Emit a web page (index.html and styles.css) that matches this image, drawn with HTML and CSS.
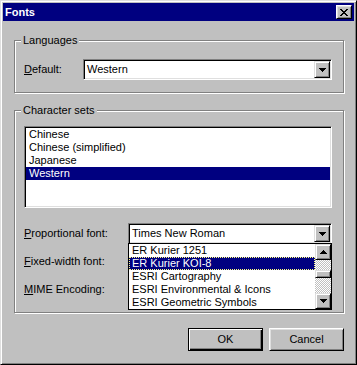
FILE: index.html
```html
<!DOCTYPE html>
<html>
<head>
<meta charset="utf-8">
<link rel="stylesheet" href="styles.css">
</head>
<body>
<div class="window">
  <div class="titlebar">
    <span class="title">Fonts</span>
    <button class="close"><svg width="8" height="7" viewBox="0 0 8 7" shape-rendering="crispEdges"><path d="M0 0h2v1H0zM6 0h2v1H6zM1 1h2v1H1zM5 1h2v1H5zM2 2h4v1H2zM3 3h2v1H3zM2 4h4v1H2zM1 5h2v1H1zM5 5h2v1H5zM0 6h2v1H0zM6 6h2v1H6z" fill="#000"/></svg></button>
  </div>
  <div class="content">
    <div class="group lang">
      <span class="group-label">Languages</span>
      <div class="field-row">
        <label class="lbl-default"><u>D</u>efault:</label>
        <div class="combo">
          <span class="combo-text">Western</span>
          <span class="drop-btn"><svg width="7" height="4" viewBox="0 0 7 4" shape-rendering="crispEdges"><path d="M0 0h7v1H0zM1 1h5v1H1zM2 2h3v1H2zM3 3h1v1H3z" fill="#000"/></svg></span>
        </div>
      </div>
    </div>
    <div class="group charsets">
      <span class="group-label">Character sets</span>
      <ul class="listbox">
        <li>Chinese</li>
        <li>Chinese (simplified)</li>
        <li>Japanese</li>
        <li class="selected">Western</li>
      </ul>
      <div class="font-grid">
        <label><u>P</u>roportional font:</label>
        <div class="combo">
          <span class="combo-text">Times New Roman</span>
          <span class="drop-btn"><svg width="7" height="4" viewBox="0 0 7 4" shape-rendering="crispEdges"><path d="M0 0h7v1H0zM1 1h5v1H1zM2 2h3v1H2zM3 3h1v1H3z" fill="#000"/></svg></span>
          <div class="dropdown">
            <ul class="dd-items">
              <li>ER Kurier 1251</li>
              <li class="selected">ER Kurier KOI-8</li>
              <li>ESRI Cartography</li>
              <li>ESRI Environmental &amp; Icons</li>
              <li>ESRI Geometric Symbols</li>
            </ul>
            <div class="scrollbar">
              <span class="sb-btn"><svg width="7" height="4" viewBox="0 0 7 4" shape-rendering="crispEdges"><path d="M3 0h1v1H3zM2 1h3v1H2zM1 2h5v1H1zM0 3h7v1H0z" fill="#000"/></svg></span>
              <div class="sb-track"><span class="sb-thumb"></span></div>
              <span class="sb-btn"><svg width="7" height="4" viewBox="0 0 7 4" shape-rendering="crispEdges"><path d="M0 0h7v1H0zM1 1h5v1H1zM2 2h3v1H2zM3 3h1v1H3z" fill="#000"/></svg></span>
            </div>
          </div>
        </div>
        <label><u>F</u>ixed-width font:</label>
        <div class="combo"></div>
        <label><u>M</u>IME Encoding:</label>
        <div class="combo"></div>
      </div>
    </div>
    <div class="buttons">
      <button class="btn default">OK</button>
      <button class="btn">Cancel</button>
    </div>
  </div>
</div>
</body>
</html>
```
FILE: styles.css
```css
* { box-sizing: border-box; }
html, body { margin: 0; }
body {
  font: 11px/13px "Liberation Sans", Arial, sans-serif;
  color: #000;
  background: #c0c0c0;
}
.window {
  width: 357px;
  height: 365px;
  background: #c0c0c0;
  border: 1px solid;
  border-color: #dfdfdf #000 #000 #dfdfdf;
  box-shadow: inset 1px 1px #fff, inset -1px -1px #808080;
  padding: 2px;
  display: flex;
  flex-direction: column;
}
.titlebar {
  height: 18px;
  flex: none;
  background: #000080;
  color: #fff;
  display: flex;
  align-items: center;
  justify-content: space-between;
  padding: 0 2px 0 2px;
}
.title { font-weight: bold; }
.close {
  width: 16px;
  height: 14px;
  padding: 0;
  margin: 0;
  background: #c0c0c0;
  border: 1px solid;
  border-color: #fff #000 #000 #fff;
  box-shadow: inset 1px 1px #dfdfdf, inset -1px -1px #808080;
  display: flex;
  align-items: center;
  justify-content: center;
}
.close svg { display: block; }
.content {
  flex: 1;
  padding: 19px 10px 0 11px;
  display: flex;
  flex-direction: column;
}
.group {
  position: relative;
  border: 1px solid #808080;
  box-shadow: inset 1px 1px #fff, 1px 1px #fff;
}
.group-label {
  position: absolute;
  top: -7px;
  left: 6px;
  padding: 0 2px;
  background: #c0c0c0;
  line-height: 13px;
}
.lang { padding: 18px 11px 12px 9px; }
.field-row { display: flex; align-items: center; }
.lbl-default { width: 59px; flex: none; }
.combo {
  position: relative;
  flex: 1;
  height: 21px;
  display: flex;
  align-items: center;
  background: #fff;
  border: 1px solid;
  border-color: #808080 #fff #fff #808080;
  box-shadow: inset 1px 1px #000, inset -1px -1px #dfdfdf;
  padding: 1px;
}
.combo-text { flex: 1; padding-left: 2px; white-space: nowrap; }
.drop-btn {
  width: 16px;
  height: 17px;
  flex: none;
  margin-left: auto;
  display: flex;
  align-items: center;
  justify-content: center;
  background: #c0c0c0;
  border: 1px solid;
  border-color: #dfdfdf #000 #000 #dfdfdf;
  box-shadow: inset 1px 1px #fff, inset -1px -1px #808080;
}
.drop-btn svg, .sb-btn svg { display: block; }
.charsets {
  margin-top: 17px;
  padding: 15px 11px 12px 9px;
}
.listbox {
  margin: 0;
  padding: 1px;
  list-style: none;
  height: 82px;
  background: #fff;
  border: 1px solid;
  border-color: #808080 #fff #fff #808080;
  box-shadow: inset 1px 1px #000, inset -1px -1px #dfdfdf;
}
.listbox li {
  height: 13px;
  line-height: 13px;
  padding-left: 3px;
}
.listbox li.selected { background: #000080; color: #fff; }
.font-grid {
  margin-top: 15px;
  display: grid;
  grid-template-columns: 104px 1fr;
  row-gap: 7px;
  align-items: center;
}
.font-grid .combo { height: 21px; }
.dropdown {
  position: absolute;
  left: -1px;
  right: -1px;
  top: 19px;
  height: 67px;
  z-index: 1;
  background: #fff;
  border: 1px solid #000;
  display: flex;
}
.dd-items {
  flex: 1;
  margin: 0;
  padding: 0;
  list-style: none;
}
.dd-items li {
  height: 13px;
  line-height: 13px;
  padding-left: 3px;
  white-space: nowrap;
}
.dd-items li.selected {
  background: #000080;
  color: #fff;
  outline: 1px dotted #ffff80;
  outline-offset: -1px;
}
.scrollbar {
  width: 16px;
  flex: none;
  display: flex;
  flex-direction: column;
}
.sb-btn {
  width: 16px;
  height: 16px;
  flex: none;
  display: flex;
  align-items: center;
  justify-content: center;
  background: #c0c0c0;
  border: 1px solid;
  border-color: #dfdfdf #000 #000 #dfdfdf;
  box-shadow: inset 1px 1px #fff, inset -1px -1px #808080;
}
.sb-track {
  flex: 1;
  padding-top: 10px;
  background-image: repeating-conic-gradient(#fff 0 25%, #c0c0c0 0 50%);
  background-size: 2px 2px;
}
.sb-thumb {
  display: block;
  height: 8px;
  background: #c0c0c0;
  border: 1px solid;
  border-color: #dfdfdf #000 #000 #dfdfdf;
  box-shadow: inset 1px 1px #fff, inset -1px -1px #808080;
}
.buttons {
  margin-top: 15px;
  display: flex;
  justify-content: flex-end;
  gap: 6px;
}
.btn {
  width: 75px;
  height: 23px;
  padding: 0;
  margin: 0;
  font: inherit;
  color: #000;
  background: #c0c0c0;
  border: 1px solid;
  border-color: #fff #000 #000 #fff;
  box-shadow: inset 1px 1px #dfdfdf, inset -1px -1px #808080;
}
.btn.default {
  border-color: #000;
  box-shadow: inset 1px 1px #fff, inset -1px -1px #000, inset -2px -2px #808080;
}
```
